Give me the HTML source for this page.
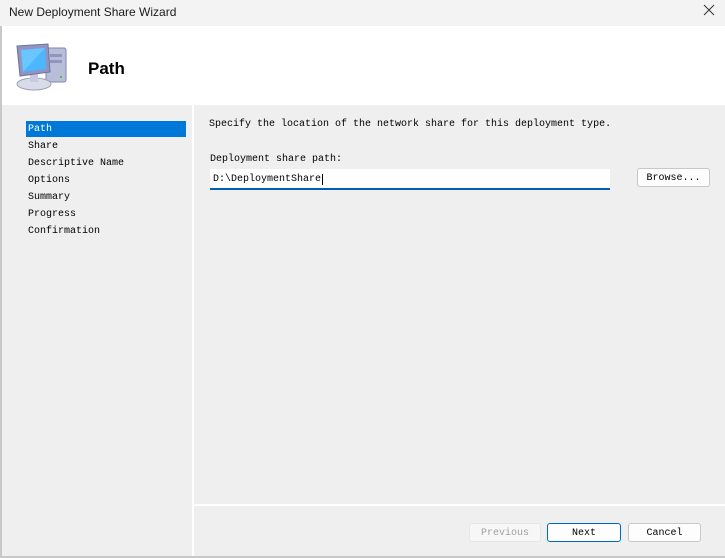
<!DOCTYPE html>
<html><head><meta charset="utf-8"><style>
*{margin:0;padding:0;box-sizing:border-box}
body{width:725px;height:558px;background:#fff;position:relative;overflow:hidden;font-family:"Liberation Mono","Noto Sans CJK SC",monospace;font-size:10px;color:#000}
.title{position:absolute;left:0;top:0;width:725px;height:26px;background:#f3f3f3;font-family:"Liberation Sans",sans-serif;font-size:12px;line-height:24px;padding-left:9px;color:#1a1a1a}
.close{position:absolute;right:10px;top:4px}
.lb{position:absolute;left:0;top:26px;width:2px;height:532px;background:#c8c8c8}
.bb{position:absolute;left:0;top:556px;width:725px;height:2px;background:#c8c8c8}
.hdr{position:absolute;left:2px;top:26px;width:723px;height:79px;background:#fff}
.hdr h1{position:absolute;left:86px;top:33px;font-family:"Liberation Sans",sans-serif;font-size:17px;font-weight:bold}
.left{position:absolute;left:2px;top:105px;width:190px;height:451px;background:#efefef}
.main{position:absolute;left:194px;top:105px;width:531px;height:399px;background:#efefef}
.foot{position:absolute;left:194px;top:506px;width:531px;height:50px;background:#efefef}
.item{position:absolute;left:24px;width:160px;height:16px;line-height:18px;padding-left:2px}
.sel{background:#0078d7;color:#fff}
.t{position:absolute;white-space:pre}
.input{position:absolute;left:16px;top:64px;width:400px;height:21px;background:#fff;border-bottom:2px solid #005fb8;line-height:21px;padding-left:3px}
.btn{position:absolute;height:19px;border:1px solid #c8c8c8;border-radius:3px;background:#fdfdfd;text-align:center;line-height:19px}
</style></head><body>
<div class="title">New Deployment Share Wizard</div>
<svg class="close" width="12" height="12" viewBox="0 0 12 12"><path d="M1 1L11 11M11 1L1 11" stroke="#333" stroke-width="1"/></svg>
<div class="hdr">
<svg style="position:absolute;left:12px;top:14px" width="56" height="52" viewBox="0 0 56 52">
<rect x="32" y="8" width="20" height="34" rx="2" fill="#b8bdd8" stroke="#7f86b0"/>
<rect x="36" y="14" width="12" height="3" fill="#8f95bf"/><rect x="36" y="20" width="12" height="3" fill="#8f95bf"/>
<rect x="46" y="36" width="2" height="2" fill="#3c3"/>
<ellipse cx="20" cy="44" rx="17" ry="6" fill="#d8dbe8" stroke="#9aa0c0"/>
<rect x="16" y="34" width="8" height="8" fill="#c6cade"/>
<path d="M3 6L34 4L36 32L6 36Z" fill="#8f95c0" stroke="#6d73a0"/>
<path d="M7 10L31 8L32 29L9 32Z" fill="#4cb6ff"/>
<path d="M7 10L31 8L18 22L9 32Z" fill="#7fd0ff" opacity=".6"/>
</svg>
<h1>Path</h1></div>
<div class="lb"></div>
<div class="left">
<div class="item sel" style="top:16px">Path</div>
<div class="item" style="top:33px">Share</div>
<div class="item" style="top:50px">Descriptive Name</div>
<div class="item" style="top:67px">Options</div>
<div class="item" style="top:84px">Summary</div>
<div class="item" style="top:101px">Progress</div>
<div class="item" style="top:118px">Confirmation</div>
</div>
<div class="main">
<div class="t" style="left:15px;top:14px">Specify the location of the network share for this deployment type.</div>
<div class="t" style="left:16px;top:49px">Deployment share path:</div>
<div class="input">D:\DeploymentShare<span style="border-left:1px solid #000;margin-left:1px"></span></div>
<div class="btn" style="left:443px;top:63px;width:73px">Browse...</div>
</div>
<div class="foot">
<div class="btn" style="left:275px;top:17px;width:72px;color:#a0a0a0;background:#f7f7f7;border-color:#e5e5e5">Previous</div>
<div class="btn" style="left:353px;top:17px;width:74px;border-color:#0067c0;background:#fdfdfd">Next</div>
<div class="btn" style="left:434px;top:17px;width:73px">Cancel</div>
</div>
<div class="bb"></div>
</body></html>
